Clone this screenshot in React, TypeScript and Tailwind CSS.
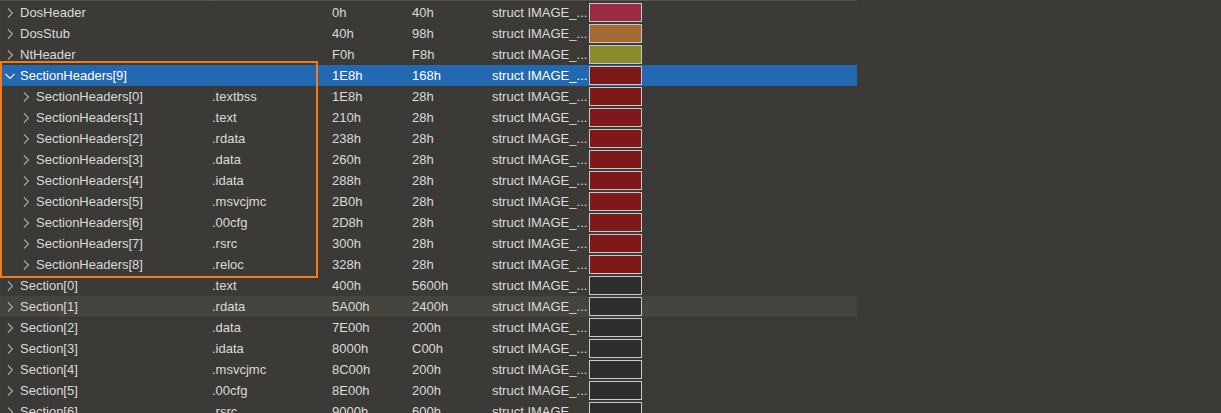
type Row = {
  name: string;
  level: number;
  open?: boolean;
  sec?: string;
  start: string;
  size: string;
  color: string;
  selected?: boolean;
  hover?: boolean;
};

const rows: Row[] = [
  { name: "DosHeader", level: 0, start: "0h", size: "40h", color: "bg-[#9b2a45]" },
  { name: "DosStub", level: 0, start: "40h", size: "98h", color: "bg-[#a36a35]" },
  { name: "NtHeader", level: 0, start: "F0h", size: "F8h", color: "bg-[#8e8b2f]" },
  { name: "SectionHeaders[9]", level: 0, open: true, start: "1E8h", size: "168h", color: "bg-[#7f1818]", selected: true },
  { name: "SectionHeaders[0]", level: 1, sec: ".textbss", start: "1E8h", size: "28h", color: "bg-[#7f1818]" },
  { name: "SectionHeaders[1]", level: 1, sec: ".text", start: "210h", size: "28h", color: "bg-[#7f1818]" },
  { name: "SectionHeaders[2]", level: 1, sec: ".rdata", start: "238h", size: "28h", color: "bg-[#7f1818]" },
  { name: "SectionHeaders[3]", level: 1, sec: ".data", start: "260h", size: "28h", color: "bg-[#7f1818]" },
  { name: "SectionHeaders[4]", level: 1, sec: ".idata", start: "288h", size: "28h", color: "bg-[#7f1818]" },
  { name: "SectionHeaders[5]", level: 1, sec: ".msvcjmc", start: "2B0h", size: "28h", color: "bg-[#7f1818]" },
  { name: "SectionHeaders[6]", level: 1, sec: ".00cfg", start: "2D8h", size: "28h", color: "bg-[#7f1818]" },
  { name: "SectionHeaders[7]", level: 1, sec: ".rsrc", start: "300h", size: "28h", color: "bg-[#7f1818]" },
  { name: "SectionHeaders[8]", level: 1, sec: ".reloc", start: "328h", size: "28h", color: "bg-[#7f1818]" },
  { name: "Section[0]", level: 0, sec: ".text", start: "400h", size: "5600h", color: "bg-[#2e2e2e]" },
  { name: "Section[1]", level: 0, sec: ".rdata", start: "5A00h", size: "2400h", color: "bg-[#2e2e2e]", hover: true },
  { name: "Section[2]", level: 0, sec: ".data", start: "7E00h", size: "200h", color: "bg-[#2e2e2e]" },
  { name: "Section[3]", level: 0, sec: ".idata", start: "8000h", size: "C00h", color: "bg-[#2e2e2e]" },
  { name: "Section[4]", level: 0, sec: ".msvcjmc", start: "8C00h", size: "200h", color: "bg-[#2e2e2e]" },
  { name: "Section[5]", level: 0, sec: ".00cfg", start: "8E00h", size: "200h", color: "bg-[#2e2e2e]" },
  { name: "Section[6]", level: 0, sec: ".rsrc", start: "9000h", size: "600h", color: "bg-[#2e2e2e]" },
];

function Chevron({ open }: { open?: boolean }) {
  if (open) {
    return (
      <svg width="12" height="12" viewBox="0 0 12 12" className="shrink-0">
        <polyline points="1.5,4 6,8.5 10.5,4" fill="none" stroke="#e8e8e8" strokeWidth="1.2" />
      </svg>
    );
  }
  return (
    <svg width="12" height="12" viewBox="0 0 12 12" className="shrink-0">
      <polyline points="4,1.5 8.5,6 4,10.5" fill="none" stroke="#a8a8a8" strokeWidth="1.1" />
    </svg>
  );
}

export default function App() {
  return (
    <div className="relative h-[413px] w-[1221px] overflow-hidden bg-[#3c3a36] font-['Liberation_Sans',Arial,sans-serif] text-[13px] text-[#dadada]">
      <div className="w-[857px]">
        {/* header edge */}
        <div className="relative h-[2px] border-t border-[#58564f]">
          <div className="absolute left-[209px] top-0 h-[2px] w-px bg-[#2a2926]" />
          <div className="absolute left-[587px] top-0 h-[2px] w-px bg-[#2a2926]" />
          <div className="absolute left-[643px] top-0 h-[2px] w-px bg-[#2a2926]" />
        </div>

        {rows.map((r) => (
          <div
            key={r.name}
            className={
              "flex h-[21px] items-center leading-none " +
              (r.selected ? "bg-[#2369b1] text-white" : r.hover ? "bg-[#45443f]" : "")
            }
          >
            <div className={"flex w-[209px] items-center gap-[4px] " + (r.level ? "pl-[20px]" : "pl-[4px]")}>
              <Chevron open={r.open} />
              <span>{r.name}</span>
            </div>
            <div className="w-[120px] pl-[3px]">{r.sec ?? ""}</div>
            <div className="w-[80px] pl-[3px]">{r.start}</div>
            <div className="w-[80px] pl-[3px]">{r.size}</div>
            <div className="w-[98px] pl-[3px] whitespace-nowrap">struct IMAGE_...</div>
            <div className="flex w-[60px] items-center pl-[2px]">
              <div className={"h-[19px] w-[53px] border-[1.5px] border-[#c8c8c8] " + r.color} />
            </div>
          </div>
        ))}
      </div>

      {/* selection outline */}
      <div className="pointer-events-none absolute left-0 top-[61px] h-[217px] w-[318px] border-2 border-[#f07c1e]" />
    </div>
  );
}
